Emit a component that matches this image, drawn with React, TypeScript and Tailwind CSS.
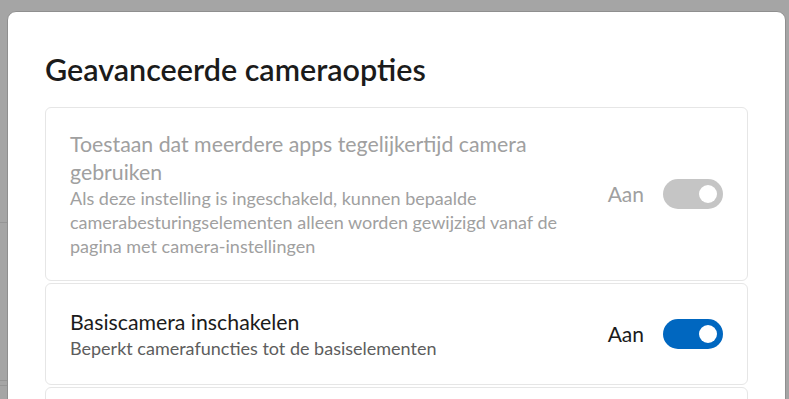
import React from 'react';

const font = { fontFamily: '"Segoe UI", Lato, "Noto Sans", sans-serif' };

function Toggle({ on, disabled }: { on: boolean; disabled?: boolean }) {
  return (
    <div
      className={`flex h-[30px] w-[60px] items-center rounded-full px-[6px] ${
        disabled ? 'bg-[#c5c5c5]' : 'bg-[#0067c0]'
      } ${on ? 'justify-end' : 'justify-start'}`}
    >
      <div className="h-[18px] w-[18px] rounded-full bg-white" />
    </div>
  );
}

const cards = [
  {
    title: 'Toestaan dat meerdere apps tegelijkertijd camera gebruiken',
    desc: 'Als deze instelling is ingeschakeld, kunnen bepaalde camerabesturingselementen alleen worden gewijzigd vanaf de pagina met camera-instellingen',
    disabled: true,
    pad: 'pt-[22px] pb-[22px]',
  },
  {
    title: 'Basiscamera inschakelen',
    desc: 'Beperkt camerafuncties tot de basiselementen',
    disabled: false,
    pad: 'pt-[24px] pb-[24px]',
  },
];

export default function App() {
  return (
    <div className="relative h-[399px] w-[789px] overflow-hidden bg-[#a5a5a5]" style={font}>
      {/* background bits peeking out */}
      <div className="absolute left-0 top-[222px] h-px w-[8px] bg-[#959595]" />
      <div className="absolute left-0 top-[380px] h-px w-[8px] bg-[#959595]" />
      <div className="absolute left-0 top-[385px] h-px w-[8px] bg-[#959595]" />

      <div className="absolute left-[7px] top-[11px] h-[420px] w-[779px] rounded-[9px] border border-[#8f8f8f] bg-white">
        <div className="px-[37px] pt-[37px]">
          <h1 className="text-[30.5px] font-semibold leading-[40px] text-[#1b1b1b]">
            Geavanceerde cameraopties
          </h1>
          <div className="mt-[18px] flex flex-col gap-[2px]">
            {cards.map((c, i) => (
              <div
                key={i}
                className={`flex items-center rounded-[6px] border border-[#e6e6e6] bg-white px-[24px] ${c.pad}`}
              >
                <div className="w-[528px]">
                  <div
                    className={`text-[21.3px] leading-[28px] ${
                      c.disabled ? 'text-[#a0a0a0]' : 'text-[#1b1b1b]'
                    }`}
                  >
                    {c.title}
                  </div>
                  <div
                    className={`text-[18px] leading-[24px] ${
                      c.disabled ? 'text-[#a0a0a0]' : 'text-[#5d5d5d]'
                    }`}
                  >
                    {c.desc}
                  </div>
                </div>
                <div className="ml-auto flex items-center gap-[19px]">
                  <span
                    className={`text-[21px] leading-[28px] ${
                      c.disabled ? 'text-[#a0a0a0]' : 'text-[#1b1b1b]'
                    }`}
                  >
                    Aan
                  </span>
                  <Toggle on disabled={c.disabled} />
                </div>
              </div>
            ))}
            <div className="h-[60px] rounded-[6px] border border-[#e6e6e6] bg-white" />
          </div>
        </div>
      </div>
    </div>
  );
}
